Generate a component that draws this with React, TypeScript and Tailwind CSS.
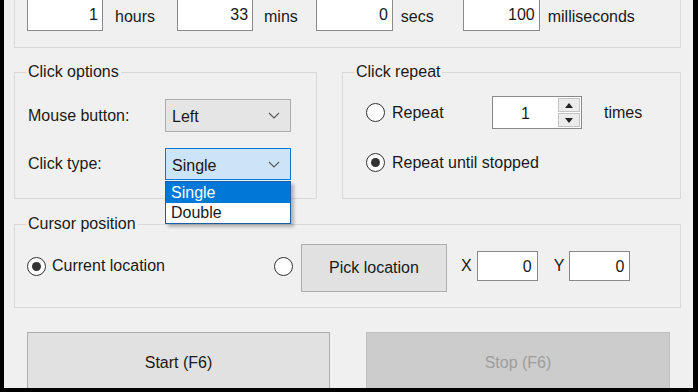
import React from 'react';

const font = { fontFamily: '"Liberation Sans", Arial, sans-serif' };

const Chevron: React.FC = () => (
  <svg width="12" height="7" viewBox="0 0 12 7" className="shrink-0">
    <path d="M1 1 L6 6 L11 1" fill="none" stroke="#5a5a5a" strokeWidth="1.2" />
  </svg>
);

const Radio: React.FC<{ checked?: boolean }> = ({ checked }) => (
  <span className="flex h-[19px] w-[19px] shrink-0 items-center justify-center rounded-full border border-[#333333] bg-white">
    {checked && <span className="h-[9px] w-[9px] rounded-full bg-[#333333]" />}
  </span>
);

const TimeField: React.FC<{ value: string; width: string }> = ({ value, width }) => (
  <div className={`${width} -mt-[2px] flex h-[33px] items-end justify-end border border-[#8a8a8a] bg-white pb-[3px] pr-[4px]`}>
    {value}
  </div>
);

const GroupTitle: React.FC<{ text: string }> = ({ text }) => (
  <span className="absolute -top-[11px] left-[11px] bg-[#f0f0f0] px-[2px] leading-[20px]">{text}</span>
);

export default function App() {
  return (
    <div className="h-[392px] w-[698px] overflow-hidden bg-black pb-[4px] pl-[4px] pr-[5px] text-[16px] text-[#1a1a1a]" style={font}>
      <div className="flex h-full w-full flex-col overflow-hidden bg-[#f0f0f0]">
        {/* timer interval group, top cut off */}
        <div className="ml-[10px] flex h-[48px] w-[667px] shrink-0 items-start border-x border-b border-[#d9d9d9]">
          <div className="ml-[12px] flex items-start">
            <TimeField value="1" width="w-[76px]" />
            <span className="ml-[12px] mt-[5px]">hours</span>
          </div>
          <div className="ml-[22px] flex items-start">
            <TimeField value="33" width="w-[76px]" />
            <span className="ml-[11px] mt-[5px]">mins</span>
          </div>
          <div className="ml-[18px] flex items-start">
            <TimeField value="0" width="w-[77px]" />
            <span className="ml-[8px] mt-[5px]">secs</span>
          </div>
          <div className="ml-[29px] flex items-start">
            <TimeField value="100" width="w-[77px]" />
            <span className="ml-[8px] mt-[5px]">milliseconds</span>
          </div>
        </div>

        {/* click options + click repeat */}
        <div className="ml-[10px] mt-[24px] flex w-[667px] shrink-0 gap-[25px]">
          <div className="relative h-[127px] w-[303px] border border-[#d9d9d9]">
            <GroupTitle text="Click options" />
            <div className="ml-[13px] mt-[26px] flex items-center">
              <span className="w-[137px]">Mouse button:</span>
              <div className="flex h-[33px] w-[126px] items-center justify-between border border-[#adadad] bg-[#e5e5e5] pl-[6px] pr-[10px]">
                <span className="mt-[3px]">Left</span>
                <Chevron />
              </div>
            </div>
            <div className="ml-[13px] mt-[16px] flex items-center">
              <span className="w-[137px]">Click type:</span>
              <div className="relative h-[32px] w-[126px]">
                <div className="flex h-full w-full items-center justify-between border border-[#0078d7] bg-[#cce4f7] pl-[6px] pr-[10px]">
                  <span className="mt-[3px]">Single</span>
                  <Chevron />
                </div>
                <div className="absolute left-0 top-[33px] z-10 w-[126px] border border-[#1d5ea6] bg-white shadow-[3px_3px_3px_rgba(0,0,0,0.25)]">
                  <div className="h-[21px] bg-[#0078d7] pl-[5px] leading-[22px] text-white">Single</div>
                  <div className="h-[20px] pl-[5px] leading-[20px]">Double</div>
                </div>
              </div>
            </div>
          </div>

          <div className="relative h-[127px] w-[339px] border border-[#d9d9d9]">
            <GroupTitle text="Click repeat" />
            <div className="ml-[23px] mt-[23px] flex h-[33px] items-center">
              <Radio />
              <span className="ml-[7px] w-[100px]">Repeat</span>
              <div className="flex h-[33px] w-[90px] border border-[#8a8a8a] bg-white">
                <span className="flex flex-1 items-center justify-center pt-[2px]">1</span>
                <div className="my-[1px] mr-[1px] flex w-[22px] flex-col gap-[1px]">
                  <div className="flex flex-1 items-center justify-center border border-[#c4c4c4] bg-[#ececec]">
                    <svg width="8" height="5" viewBox="0 0 8 5"><path d="M0 5 L4 0 L8 5 Z" fill="#222" /></svg>
                  </div>
                  <div className="flex flex-1 items-center justify-center border border-[#c4c4c4] bg-[#ececec]">
                    <svg width="8" height="5" viewBox="0 0 8 5"><path d="M0 0 L4 5 L8 0 Z" fill="#222" /></svg>
                  </div>
                </div>
              </div>
              <span className="ml-[22px]">times</span>
            </div>
            <div className="ml-[23px] mt-[17px] flex h-[33px] items-center">
              <Radio checked />
              <span className="ml-[7px]">Repeat until stopped</span>
            </div>
          </div>
        </div>

        {/* cursor position */}
        <div className="relative ml-[10px] mt-[25px] flex h-[84px] w-[667px] shrink-0 items-center border border-[#d9d9d9]">
          <GroupTitle text="Cursor position" />
          <div className="ml-[12px] flex items-center">
            <Radio checked />
            <span className="ml-[6px]">Current location</span>
          </div>
          <div className="ml-[109px] flex items-center">
            <Radio />
          </div>
          <div className="ml-[8px] mt-[3px] flex h-[48px] w-[146px] items-center justify-center border border-[#adadad] bg-[#e1e1e1]">
            Pick location
          </div>
          <span className="ml-[14px]">X</span>
          <div className="ml-[5px] flex h-[30px] w-[61px] items-center justify-end border border-[#8a8a8a] bg-white pr-[5px] pt-[2px]">0</div>
          <span className="ml-[16px]">Y</span>
          <div className="ml-[5px] flex h-[30px] w-[61px] items-center justify-end border border-[#8a8a8a] bg-white pr-[5px] pt-[2px]">0</div>
        </div>

        {/* start / stop */}
        <div className="ml-[23px] mt-[24px] flex shrink-0 gap-[36px]">
          <div className="flex h-[62px] w-[303px] items-center justify-center border border-[#adadad] bg-[#e1e1e1]">
            Start (F6)
          </div>
          <div className="flex h-[62px] w-[304px] items-center justify-center border border-[#bfbfbf] bg-[#cccccc] text-[#9d9d9d]">
            Stop (F6)
          </div>
        </div>
      </div>
    </div>
  );
}
